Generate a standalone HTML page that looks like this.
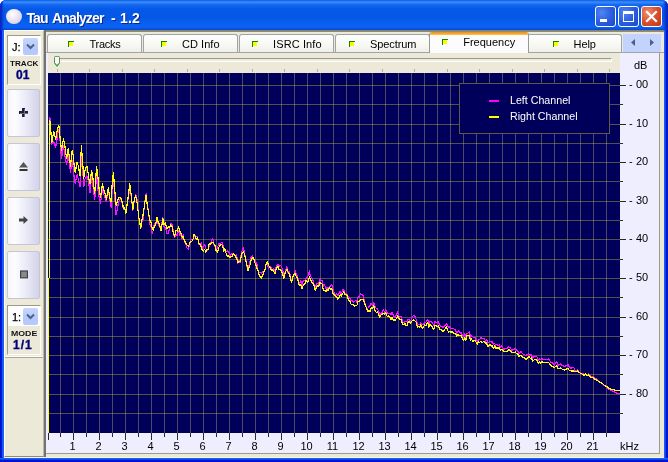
<!DOCTYPE html>
<html><head><meta charset="utf-8"><title>Tau Analyzer - 1.2</title>
<style>
*{box-sizing:border-box;margin:0;padding:0}
html,body{width:668px;height:462px;overflow:hidden;background:#fff}
body{position:relative;font-family:"Liberation Sans",sans-serif;font-size:11px;color:#000}
div,i,span,svg{position:absolute}
#win{will-change:transform;left:0;top:0;width:668px;height:462px;background:#0a3ee0;border-radius:6px 6px 0 0;overflow:hidden}
#tb{left:0;top:0;width:668px;height:30px;background:linear-gradient(to bottom,#0a5be8 0%,#3c8cfb 7%,#1268f0 16%,#0659e8 30%,#0558e6 60%,#0a62f3 85%,#0a5ff0 92%,#0748d0 100%)}
#bl{left:0;top:30px;width:4px;height:432px;background:linear-gradient(to right,#0014d0 0%,#0014d0 35%,#1858f5 62%,#1e62fa 100%)}
#br{left:664px;top:30px;width:4px;height:432px;background:linear-gradient(to left,#0014d0 0%,#0014d0 45%,#1858f5 70%,#1e62fa 100%)}
#bb{left:0;top:458px;width:668px;height:4px;background:linear-gradient(to bottom,#1e62fa 0%,#1858f5 30%,#0014d0 60%,#0014d0 100%)}
#ttl{left:26.500px;top:10px;width:130px;height:16px;font-weight:bold;font-size:14px;line-height:16px;color:#fff;white-space:nowrap;text-shadow:1px 1px 0 #0a2a8a;letter-spacing:-0.4px}
#ttl span{top:0}
#ico{left:6px;top:9px;width:15.500px;height:15px;border-radius:50%;background:radial-gradient(circle at 40% 35%,#ffffff 0%,#efeaf4 35%,#dcd6e8 70%,#c2bcd8 100%)}
.cb{top:6px;width:21px;height:21px;border-radius:3px;border:1px solid #fff}
#cmin,#cmax{background:radial-gradient(circle at 30% 30%,#4f86f5 0%,#2b5fe0 50%,#1c46c8 100%)}
#ccls{background:radial-gradient(circle at 30% 30%,#ee8f72 0%,#d8502c 50%,#b9391a 100%)}
#client{left:4px;top:30px;width:660px;height:428px;background:#ece9d8}
/* left panel */
#lp{left:4px;top:30px;width:40px;height:427px;background:#ece9d8;border-top:1px solid #fff;border-left:1px solid #fff;border-right:1px solid #bab7a8;border-bottom:1px solid #8c8a7c}
.grp{left:7px;width:34px;border:1px solid;border-color:#9d9a8c #fff #fff #9d9a8c}
.combo{left:8px;width:32px;height:20px;background:#fff}
.combo span{-webkit-text-stroke:0.25px #000}
.cbtn{width:15px;height:17px;background:linear-gradient(to bottom,#c6d6fd,#b5c8fb 60%,#b7cafc);border-radius:2px}
.btn{left:7px;width:33px;height:48px;border:1px solid #c4c4dc;border-radius:2px;background:linear-gradient(to right,#f4f4fc 0%,#fdfdff 20%,#ececf8 55%,#d2d2ea 100%)}
.lbl{font-weight:bold;font-size:7px;line-height:8px;letter-spacing:0;transform-origin:0 0;white-space:nowrap;color:#111}
.num{font-weight:bold;font-size:12px;line-height:12px;color:#00007c;white-space:nowrap;-webkit-text-stroke:0.35px #00007c}
/* tabs */
.tab{top:34px;width:95px;height:19px;border:1px solid #9ca5a8;border-bottom:none;border-radius:3px 3px 0 0;background:linear-gradient(to bottom,#fefefe,#f7f7f2 60%,#eeeee6)}
.tab span,#seltab span{top:3px;line-height:13px;font-size:11px;white-space:nowrap;letter-spacing:-0.35px}
.ti{top:6px;width:6px;height:6px;background:linear-gradient(#ff0,#ff0) no-repeat 0 0/4px 4px;border-top:1px solid #0a860a;border-left:1px solid #0a860a}
#seltab{left:429px;top:32px;width:100px;height:22px;background:#fcfcfe;border:1px solid #919b9c;border-bottom:none;border-top:none;border-radius:3px 3px 0 0;overflow:hidden}
#seltab b{position:absolute;left:0;top:0;width:100px;height:3px;background:linear-gradient(to bottom,#e68b2c,#ffc73c)}
.tk{height:1px;background:#2a2a2a}
.dbl{left:629px;width:30px;font-size:11px;line-height:13px;white-space:nowrap}
.xl{top:440px;width:21px;text-align:center;font-size:11px;line-height:13px}
.stk{top:69px;width:1px;height:3px;background:#b3b1a2}
</style></head><body>
<div id="win">
<div id="tb"></div><div style="left:0;top:0;width:4px;height:30px;background:linear-gradient(to right,#0a24c4 0%,#0a30cc 40%,rgba(10,60,220,0) 100%)"></div><div style="left:663px;top:0;width:5px;height:30px;background:linear-gradient(to left,#0a24c4 0%,#0a30cc 40%,rgba(10,60,220,0) 100%)"></div><div id="bl"></div><div id="br"></div><div id="bb"></div>
<div id="ico"></div>
<div id="ttl"><span style="left:0;letter-spacing:-0.9px">Tau</span> <span style="left:25.5px;letter-spacing:-0.85px">Analyzer</span> <span style="left:84.5px">-</span> <span style="left:93.5px;letter-spacing:0.2px">1.2</span></div>
<div class="cb" id="cmin" style="left:595px"><i style="left:4px;top:12px;width:7px;height:3px;background:#fff"></i></div>
<div class="cb" id="cmax" style="left:618px"><i style="left:4px;top:4px;width:11px;height:11px;border:1px solid #fff;border-top-width:3px"></i></div>
<div class="cb" id="ccls" style="left:641px"><svg width="19" height="19" viewBox="0 0 19 19" style="left:0;top:0"><path d="M5 5 L14 14 M14 5 L5 14" stroke="#fff" stroke-width="2.2" stroke-linecap="square"/></svg></div>
<div id="client"></div>

<!-- right region sunken border -->
<div style="left:44px;top:30px;width:620px;height:1px;background:#858272"></div>
<div style="left:44px;top:31px;width:620px;height:1px;background:#8f8c7c"></div>
<div style="left:44px;top:30px;width:2px;height:427px;background:#737370"></div>

<!-- left panel -->
<div id="lp"></div>
<div style="left:4px;top:356px;width:39px;height:1px;background:#fff"></div><div style="left:5px;top:357px;width:38px;height:1px;background:#aaa796"></div>
<div class="grp" style="top:35px;height:50px"></div>
<div class="combo" style="top:36px"><span style="left:4px;top:5px;font-size:11px;line-height:13px">J:</span><div class="cbtn" style="left:15px;top:2px"><svg width="15" height="17" viewBox="0 0 15 17" style="left:0;top:0"><path d="M4 6.5 L7.5 10 L11 6.5" fill="none" stroke="#4d6185" stroke-width="2"/></svg></div></div>
<div class="lbl" style="left:10px;top:60px;transform:scaleX(1.16)">TRACK</div>
<div class="num" style="left:16px;top:69px">01</div>

<div class="btn" style="top:89px"><svg width="30" height="46" viewBox="0 0 30 46" style="left:0;top:0"><path d="M14 18 h3 v3 h3 v3 h-3 v3 h-3 v-3 h-3 v-3 h3z" fill="#1e1e3c"/><path d="M16 19 h1 v8 h-1z M12 23 h8 v1 h-8z" fill="#6c6c78"/></svg></div>
<div class="btn" style="top:143px"><svg width="30" height="46" viewBox="0 0 30 46" style="left:0;top:0"><path d="M15.500 18 L20 23.500 L11 23.500z" fill="#555"/><rect x="11.500" y="25" width="8" height="2" fill="#333"/></svg></div>
<div class="btn" style="top:197px"><svg width="30" height="46" viewBox="0 0 30 46" style="left:0;top:0"><path d="M11 20.500 h4.500 v-2.500 l4.500 4 l-4.500 4 v-2.500 h-4.500z" fill="#444"/></svg></div>
<div class="btn" style="top:251px"><svg width="30" height="46" viewBox="0 0 30 46" style="left:0;top:0"><rect x="12.600" y="19" width="6.800" height="6.800" fill="#8a8a8a" stroke="#444" stroke-width="1.200"/></svg></div>

<div class="grp" style="top:305px;height:50px"></div>
<div class="combo" style="top:306px"><span style="left:4px;top:5px;font-size:11px;line-height:13px">1:</span><div class="cbtn" style="left:15px;top:2px"><svg width="15" height="17" viewBox="0 0 15 17" style="left:0;top:0"><path d="M4 6.5 L7.5 10 L11 6.5" fill="none" stroke="#4d6185" stroke-width="2"/></svg></div></div>
<div class="lbl" style="left:11px;top:330px;transform:scaleX(1.25)">MODE</div>
<div class="num" style="left:13px;top:339px;letter-spacing:1px">1/1</div>

<!-- tab strip -->
<div class="tab" style="left:47px"><i class="ti" style="left:20px"></i><span style="left:41.5px;letter-spacing:-0.25px">Tracks</span></div><div class="tab" style="left:143px"><i class="ti" style="left:17px"></i><span style="left:38.0px;letter-spacing:0.05px">CD Info</span></div><div class="tab" style="left:239px"><i class="ti" style="left:12px"></i><span style="left:33.0px;letter-spacing:0.12px">ISRC Info</span></div><div class="tab" style="left:335px"><i class="ti" style="left:13px"></i><span style="left:34.0px;letter-spacing:-0.10px">Spectrum</span></div><div class="tab" style="left:527px"><i class="ti" style="left:25px"></i><span style="left:45.5px;letter-spacing:-0.05px">Help</span></div>
<div style="left:46px;top:52px;width:618px;height:1px;background:#a0a6a6"></div>
<div id="seltab"><b></b><i class="ti" style="left:12px;top:7px"></i><span style="left:33.2px;top:4px;letter-spacing:0">Frequency</span></div>
<div style="left:429px;top:35px;width:1px;height:18px;background:#919b9c"></div>
<div style="left:528px;top:35px;width:1px;height:18px;background:#919b9c"></div>
<div style="left:623px;top:34px;width:38px;height:18px;background:#c3d3fd"><svg width="38" height="18" viewBox="0 0 38 18" style="left:0;top:0"><path d="M12 5 L8 8.500 L12 12z M27 5 L31 8.500 L27 12z" fill="#4d6185"/></svg></div>

<!-- plot control background -->
<div style="left:46px;top:53px;width:613px;height:400px;background:#eeeeff"></div>
<div style="left:659px;top:53px;width:1px;height:401px;background:#9d9a8c"></div>
<div style="left:46px;top:453px;width:614px;height:1px;background:#9d9a8c"></div>
<div style="left:4px;top:457px;width:660px;height:1px;background:#f8f6ea"></div>
<!-- slider panel -->
<div style="left:48px;top:53px;width:572px;height:20px;background:#ece9d8"></div>
<div style="left:59px;top:58px;width:553px;height:4px;border:1px solid;border-color:#9d9a8c #fff #fff #9d9a8c;background:#efecdf"></div>
<div class="stk" style="left:57px"></div><div class="stk" style="left:89px"></div><div class="stk" style="left:122px"></div><div class="stk" style="left:154px"></div><div class="stk" style="left:187px"></div><div class="stk" style="left:219px"></div><div class="stk" style="left:252px"></div><div class="stk" style="left:284px"></div><div class="stk" style="left:317px"></div><div class="stk" style="left:349px"></div><div class="stk" style="left:382px"></div><div class="stk" style="left:414px"></div><div class="stk" style="left:447px"></div><div class="stk" style="left:479px"></div><div class="stk" style="left:512px"></div><div class="stk" style="left:544px"></div><div class="stk" style="left:577px"></div><div class="stk" style="left:609px"></div>
<svg width="8" height="13" viewBox="0 0 8 13" style="left:53px;top:55px"><path d="M1.5 2.500 Q1.500 1.500 2.500 1.500 L5.500 1.500 Q6.500 1.500 6.500 2.500 L6.500 8 L4 11 L1.500 8z" fill="#f8f8f4" stroke="#6f7f72" stroke-width="1"/><path d="M2 1.500 H6" stroke="#3cc23c" stroke-width="1.200"/><path d="M2 8.500 L4 11 L6 8.500" fill="none" stroke="#2fa52f" stroke-width="1.200"/></svg>

<!-- plot -->
<svg width="572" height="360" viewBox="0 0 572 360" style="left:48px;top:73px;background:#00005a" shape-rendering="crispEdges">
<g fill="rgba(178,180,50,0.46)"><rect x="12" y="0" width="1" height="360" fill="rgba(150,150,115,0.5)"/><rect x="25" y="0" width="1" height="360" fill="rgba(150,150,115,0.5)"/><rect x="38" y="0" width="1" height="360" fill="rgba(150,150,115,0.5)"/><rect x="51" y="0" width="1" height="360" fill="rgba(150,150,115,0.5)"/><rect x="64" y="0" width="1" height="360" fill="rgba(150,150,115,0.5)"/><rect x="77" y="0" width="1" height="360" fill="rgba(150,150,115,0.5)"/><rect x="90" y="0" width="1" height="360" fill="rgba(150,150,115,0.5)"/><rect x="103" y="0" width="1" height="360" fill="rgba(150,150,115,0.5)"/><rect x="116" y="0" width="1" height="360" fill="rgba(150,150,115,0.5)"/><rect x="129" y="0" width="1" height="360" fill="rgba(150,150,115,0.5)"/><rect x="142" y="0" width="1" height="360" fill="rgba(150,150,115,0.5)"/><rect x="155" y="0" width="1" height="360" fill="rgba(150,150,115,0.5)"/><rect x="168" y="0" width="1" height="360" fill="rgba(150,150,115,0.5)"/><rect x="181" y="0" width="1" height="360" fill="rgba(150,150,115,0.5)"/><rect x="194" y="0" width="1" height="360" fill="rgba(150,150,115,0.5)"/><rect x="207" y="0" width="1" height="360" fill="rgba(150,150,115,0.5)"/><rect x="220" y="0" width="1" height="360" fill="rgba(150,150,115,0.5)"/><rect x="233" y="0" width="1" height="360" fill="rgba(150,150,115,0.5)"/><rect x="246" y="0" width="1" height="360" fill="rgba(150,150,115,0.5)"/><rect x="259" y="0" width="1" height="360" fill="rgba(150,150,115,0.5)"/><rect x="272" y="0" width="1" height="360" fill="rgba(150,150,115,0.5)"/><rect x="285" y="0" width="1" height="360" fill="rgba(150,150,115,0.5)"/><rect x="298" y="0" width="1" height="360" fill="rgba(150,150,115,0.5)"/><rect x="311" y="0" width="1" height="360" fill="rgba(150,150,115,0.5)"/><rect x="324" y="0" width="1" height="360" fill="rgba(150,150,115,0.5)"/><rect x="337" y="0" width="1" height="360" fill="rgba(150,150,115,0.5)"/><rect x="350" y="0" width="1" height="360" fill="rgba(150,150,115,0.5)"/><rect x="363" y="0" width="1" height="360" fill="rgba(150,150,115,0.5)"/><rect x="376" y="0" width="1" height="360" fill="rgba(150,150,115,0.5)"/><rect x="389" y="0" width="1" height="360" fill="rgba(150,150,115,0.5)"/><rect x="402" y="0" width="1" height="360" fill="rgba(150,150,115,0.5)"/><rect x="415" y="0" width="1" height="360" fill="rgba(150,150,115,0.5)"/><rect x="428" y="0" width="1" height="360" fill="rgba(150,150,115,0.5)"/><rect x="441" y="0" width="1" height="360" fill="rgba(150,150,115,0.5)"/><rect x="454" y="0" width="1" height="360" fill="rgba(150,150,115,0.5)"/><rect x="467" y="0" width="1" height="360" fill="rgba(150,150,115,0.5)"/><rect x="480" y="0" width="1" height="360" fill="rgba(150,150,115,0.5)"/><rect x="493" y="0" width="1" height="360" fill="rgba(150,150,115,0.5)"/><rect x="506" y="0" width="1" height="360" fill="rgba(150,150,115,0.5)"/><rect x="519" y="0" width="1" height="360" fill="rgba(150,150,115,0.5)"/><rect x="532" y="0" width="1" height="360" fill="rgba(150,150,115,0.5)"/><rect x="545" y="0" width="1" height="360" fill="rgba(150,150,115,0.5)"/><rect x="558" y="0" width="1" height="360" fill="rgba(150,150,115,0.5)"/><rect x="0" y="12" width="572" height="1"/><rect x="0" y="31" width="572" height="1"/><rect x="0" y="51" width="572" height="1"/><rect x="0" y="70" width="572" height="1"/><rect x="0" y="89" width="572" height="1"/><rect x="0" y="108" width="572" height="1"/><rect x="0" y="128" width="572" height="1"/><rect x="0" y="147" width="572" height="1"/><rect x="0" y="166" width="572" height="1"/><rect x="0" y="186" width="572" height="1"/><rect x="0" y="205" width="572" height="1"/><rect x="0" y="224" width="572" height="1"/><rect x="0" y="244" width="572" height="1"/><rect x="0" y="263" width="572" height="1"/><rect x="0" y="282" width="572" height="1"/><rect x="0" y="301" width="572" height="1"/><rect x="0" y="321" width="572" height="1"/><rect x="0" y="340" width="572" height="1"/></g>
<rect x="411.500" y="10.500" width="150" height="50" fill="#00005a" stroke="#5c5c46" stroke-width="1"/>
<g shape-rendering="crispEdges" fill="none" stroke-width="1.2" stroke-linejoin="round">
<polyline stroke="#ff10ff" points="1.8,43.7 3.8,71.0 5.7,68.4 7.7,74.1 8.7,67.9 9.8,61.0 10.8,56.3 12.2,69.1 13.5,85.6 15.5,72.5 16.5,80.2 17.6,86.6 18.6,91.5 20.2,82.8 21.3,89.1 22.5,99.1 24.1,87.8 25.1,93.9 26.1,104.1 27.2,110.1 29.1,101.7 30.5,106.7 31.9,114.0 33.4,84.0 34.6,94.9 35.8,113.8 36.8,106.6 37.8,104.5 38.9,103.2 39.9,106.1 41.0,111.5 42.0,120.1 43.6,103.2 44.6,109.5 45.6,117.4 46.7,126.3 48.6,101.8 49.9,116.0 51.2,124.9 52.5,130.6 54.5,115.0 55.8,121.5 57.1,124.9 58.4,128.7 60.3,116.0 61.7,125.5 63.1,134.3 64.2,116.4 65.4,102.4 66.8,124.8 68.1,141.7 69.4,135.3 70.7,128.3 72.0,126.5 73.2,126.0 74.4,131.3 75.5,136.2 76.7,135.9 77.9,137.3 79.2,130.4 80.5,124.4 81.8,114.6 82.8,120.3 83.8,128.8 84.9,137.2 86.3,126.9 87.6,122.0 88.6,123.7 89.6,131.5 90.7,146.0 91.7,147.7 92.7,155.8 93.8,149.4 94.9,146.7 96.0,135.9 97.1,127.0 98.1,120.8 99.4,131.7 100.7,140.2 102.0,151.3 103.1,154.2 104.1,160.3 105.2,157.5 106.5,150.4 107.8,151.3 109.1,147.5 110.4,152.0 111.7,153.9 113.0,155.7 114.9,144.7 116.2,154.9 117.5,154.3 118.8,160.8 120.1,160.2 121.4,156.5 122.7,150.5 124.0,151.0 125.3,158.9 126.6,164.9 127.9,161.8 129.2,162.2 130.5,157.3 131.7,162.2 132.8,161.9 134.0,166.1 135.2,161.8 136.4,169.0 137.7,169.9 138.9,175.0 140.2,176.3 141.4,172.0 142.6,166.5 143.8,166.1 144.9,166.9 146.1,163.6 147.3,162.1 148.4,163.3 149.6,163.8 150.8,171.2 151.9,171.3 153.1,169.8 154.3,175.3 155.5,172.7 156.6,171.5 157.8,175.7 159.0,177.2 160.1,176.8 161.3,172.6 162.5,171.2 163.6,166.8 164.8,165.5 166.0,171.5 167.2,173.5 168.3,177.1 169.5,174.1 170.8,171.0 172.1,171.2 173.4,169.4 174.6,169.5 175.7,176.9 176.9,177.3 178.1,178.4 179.2,178.0 180.4,178.5 181.6,181.0 182.7,182.5 183.9,180.1 185.1,180.6 186.3,181.9 187.4,183.3 188.6,181.8 189.8,190.6 190.9,187.2 192.2,189.7 193.5,179.2 195.5,174.6 196.6,180.9 197.7,184.7 198.8,192.2 200.0,197.3 201.1,191.9 202.2,188.1 203.3,183.8 204.5,183.1 205.6,185.5 206.7,187.2 207.8,189.3 208.9,191.5 210.1,197.8 211.2,199.7 212.3,199.4 213.4,200.3 214.6,198.3 215.8,198.7 217.0,197.2 218.2,190.9 219.4,191.1 220.5,195.1 221.6,193.3 222.6,193.3 223.7,197.4 224.8,197.5 225.8,195.9 226.9,199.6 228.4,193.2 229.9,191.0 231.1,193.6 232.3,192.3 233.5,193.4 234.7,197.1 235.9,201.7 237.4,199.0 238.9,193.6 240.0,199.2 241.1,198.9 242.3,201.6 243.4,209.5 244.9,204.4 246.4,200.1 247.4,197.7 248.5,201.9 249.6,202.3 250.6,211.3 251.7,209.8 252.8,207.9 253.9,213.7 254.9,208.5 256.0,207.5 257.1,207.6 258.1,205.4 259.2,204.7 260.3,202.5 261.3,197.9 262.5,203.4 263.7,205.2 264.9,207.3 266.1,211.3 267.3,214.4 268.5,210.8 269.6,210.7 270.7,211.3 271.8,206.3 273.0,207.5 274.2,207.6 275.4,213.2 276.6,211.6 277.8,215.4 279.0,214.8 280.2,215.9 281.4,213.9 282.6,212.7 283.8,211.3 285.0,216.3 286.2,219.9 287.4,222.3 288.6,220.7 289.8,222.6 291.0,220.5 292.2,218.3 293.4,221.4 294.6,216.8 295.8,216.6 297.0,220.1 298.2,220.3 299.4,221.7 300.6,225.7 301.8,224.7 303.0,227.2 304.2,227.3 305.4,229.4 306.6,228.5 307.7,227.3 308.9,229.1 310.1,224.5 311.3,223.5 312.5,220.8 313.7,221.9 314.9,222.0 316.1,226.8 317.3,231.3 318.5,234.4 319.7,235.7 320.9,233.5 322.1,232.7 323.3,230.2 324.5,232.7 325.7,229.1 326.9,232.8 328.1,235.3 329.3,235.7 330.5,238.0 331.7,242.4 332.9,240.8 334.1,239.4 335.3,236.4 336.5,239.1 337.7,236.3 338.8,239.7 339.8,240.0 340.9,240.4 342.0,240.8 343.0,242.0 344.1,239.4 345.2,242.0 346.3,244.1 347.4,244.3 348.5,241.7 349.7,239.0 350.9,244.2 352.1,243.9 353.3,243.2 354.5,248.8 355.7,249.3 356.8,248.8 357.9,248.7 359.0,249.0 360.1,246.6 361.3,246.5 362.4,249.0 363.5,245.4 364.6,243.4 365.8,242.4 367.0,243.3 368.2,246.5 369.4,251.3 370.6,251.4 371.7,251.8 372.7,249.2 373.7,251.7 374.8,251.5 375.8,250.7 376.8,249.9 377.9,249.1 378.9,247.3 379.9,246.9 381.0,250.4 382.0,248.0 383.4,248.7 384.5,249.8 385.7,252.3 386.8,248.9 388.0,249.1 389.1,249.5 390.3,248.1 391.4,251.5 392.6,253.0 393.7,253.2 394.9,254.4 396.0,253.5 397.2,252.5 398.3,250.7 399.5,252.6 400.6,254.5 401.8,253.9 402.9,255.8 404.1,255.8 405.2,255.3 406.4,256.3 407.5,257.3 408.7,260.0 409.8,258.1 411.0,257.9 412.1,260.2 413.3,259.6 414.4,262.5 415.6,263.8 416.7,260.5 417.9,264.7 419.0,260.8 420.2,259.9 421.3,258.6 422.5,264.1 423.6,262.3 424.8,263.9 425.9,264.9 427.1,264.2 428.2,267.1 429.4,268.1 430.5,266.5 431.7,266.6 432.8,264.7 434.0,265.6 435.1,265.2 436.3,265.2 437.4,268.0 438.6,266.2 439.7,270.4 440.9,269.2 442.0,268.1 443.2,269.2 444.3,268.7 445.5,271.8 446.6,270.3 447.8,272.1 448.9,271.3 450.1,272.4 451.2,271.9 452.4,274.2 453.5,272.7 454.7,274.4 455.8,276.6 457.0,275.5 458.1,275.0 459.3,275.6 460.4,274.0 461.6,274.5 462.7,275.4 463.9,277.6 465.0,276.3 466.2,276.6 467.3,275.6 468.5,277.0 469.6,277.8 470.8,280.9 471.9,279.3 473.1,278.8 474.2,280.1 475.4,281.3 476.5,281.6 477.7,282.6 478.8,281.7 480.0,281.0 481.1,281.1 482.3,282.0 483.4,281.2 484.6,285.5 485.7,283.4 486.9,283.7 488.0,283.0 489.2,284.1 490.3,287.8 491.5,285.9 492.6,286.8 493.8,285.1 494.9,286.6 496.1,286.2 497.2,286.4 498.4,286.2 499.5,286.3 500.7,285.7 501.8,287.6 503.0,289.2 504.1,289.6 505.3,290.5 506.4,291.9 507.6,290.3 508.7,288.8 509.9,292.5 511.0,291.7 512.2,290.8 513.3,291.7 514.5,292.6 515.6,292.9 516.8,293.7 517.9,292.6 519.1,292.1 520.2,292.0 521.4,294.2 522.5,295.0 523.7,295.0 524.8,294.3 526.0,295.0 527.1,297.7 528.3,298.0 529.4,296.6 530.6,298.6 531.7,299.4 532.9,300.4 534.0,300.4 535.2,301.0 536.3,301.8 537.5,300.3 538.6,302.0 539.8,302.3 540.9,300.8 542.1,302.7 543.2,304.2 544.4,303.3 545.5,303.9 546.7,305.2 547.8,305.6 549.0,306.6 550.1,307.7 551.3,308.7 552.4,309.2 553.6,310.2 554.7,311.1 555.9,312.3 557.0,313.0 558.2,314.2 559.3,315.0 560.5,316.1 561.6,316.6 562.8,317.5 563.9,317.9 565.1,318.4 566.2,319.0 567.4,319.7 568.5,320.0 569.7,320.4 570.8,320.5 571.5,320.9"/>
<polyline stroke="#ffff00" points="1.8,46.5 3.8,69.9 5.7,58.2 7.7,66.0 8.7,60.4 9.8,54.8 10.8,52.3 12.2,65.9 13.5,77.7 15.5,66.0 16.5,69.9 17.6,79.2 18.6,85.5 20.2,75.7 21.3,83.7 22.5,93.3 24.1,77.7 25.1,82.2 26.1,92.0 27.2,99.1 29.1,89.4 30.5,93.4 31.9,103.0 33.4,73.0 34.6,88.6 35.8,105.0 36.8,98.5 37.8,94.7 38.9,93.3 39.9,98.7 41.0,106.9 42.0,110.8 43.6,97.2 44.6,102.7 45.6,111.1 46.7,120.6 48.6,93.3 49.9,104.4 51.2,116.8 52.5,124.5 54.5,110.8 55.8,116.5 57.1,120.6 58.4,126.4 60.3,114.7 61.7,124.4 63.1,128.4 64.2,111.0 65.4,99.1 66.8,117.8 68.1,132.3 69.4,128.4 70.7,124.9 72.0,124.5 73.2,125.3 74.4,129.6 75.5,135.7 76.7,135.0 77.9,140.1 79.2,130.8 80.5,121.4 81.8,110.8 82.8,118.5 83.8,128.0 84.9,136.2 86.3,126.7 87.6,122.5 88.6,126.5 89.6,134.0 90.7,143.5 91.7,148.6 92.7,155.7 93.8,147.9 94.9,142.9 96.0,135.5 97.1,127.9 98.1,122.5 99.4,132.7 100.7,140.6 102.0,147.9 103.1,149.6 104.1,154.8 105.2,157.6 106.5,153.2 107.8,150.8 109.1,144.0 110.4,149.9 111.7,151.8 113.0,157.6 114.9,145.9 116.2,152.0 117.5,150.1 118.8,155.7 120.1,153.9 121.4,154.6 122.7,151.8 124.0,153.6 125.3,159.5 126.6,163.5 127.9,157.4 129.2,158.0 130.5,153.7 131.7,158.0 132.8,159.6 134.0,164.1 135.2,163.5 136.4,167.4 137.7,170.5 138.9,171.8 140.2,173.2 141.4,171.3 142.6,168.3 143.8,168.2 144.9,166.5 146.1,161.5 147.3,163.3 148.4,166.4 149.6,164.7 150.8,170.5 151.9,171.2 153.1,173.7 154.3,177.3 155.5,177.9 156.6,176.2 157.8,179.0 159.0,176.4 160.1,176.2 161.3,170.3 162.5,171.0 163.6,169.3 164.8,169.3 166.0,170.9 167.2,172.5 168.3,178.7 169.5,179.0 170.8,174.2 172.1,172.3 173.4,171.2 174.6,172.9 175.7,178.2 176.9,175.8 178.1,180.3 179.2,182.9 180.4,182.9 181.6,184.5 182.7,183.7 183.9,183.6 185.1,181.0 186.3,181.2 187.4,183.6 188.6,184.8 189.8,189.5 190.9,188.8 192.2,188.9 193.5,181.5 195.5,178.4 196.6,181.7 197.7,186.9 198.8,191.8 200.0,197.9 201.1,194.5 202.2,191.6 203.3,186.7 204.5,184.4 205.6,184.7 206.7,189.3 207.8,191.7 208.9,194.9 210.1,197.8 211.2,202.3 212.3,203.7 213.4,205.4 214.6,202.2 215.8,199.4 217.0,196.3 218.2,190.1 219.4,188.9 220.5,192.5 221.6,193.7 222.6,195.8 223.7,197.2 224.8,197.0 225.8,198.7 226.9,200.9 228.4,195.2 229.9,193.4 231.1,196.4 232.3,196.1 233.5,198.5 234.7,201.6 235.9,205.4 237.4,199.3 238.9,196.4 240.0,199.0 241.1,201.0 242.3,204.1 243.4,209.9 244.9,203.7 246.4,200.9 247.4,201.1 248.5,204.5 249.6,205.0 250.6,211.2 251.7,212.1 252.8,212.0 253.9,215.9 254.9,213.0 256.0,211.7 257.1,210.1 258.1,207.2 259.2,209.0 260.3,208.0 261.3,203.9 262.5,206.4 263.7,209.2 264.9,210.0 266.1,212.8 267.3,217.4 268.5,214.7 269.6,212.5 270.7,213.3 271.8,209.9 273.0,210.0 274.2,211.2 275.4,217.4 276.6,217.2 277.8,218.9 279.0,216.6 280.2,217.9 281.4,214.8 282.6,216.6 283.8,215.9 285.0,220.3 286.2,221.8 287.4,223.1 288.6,223.1 289.8,226.3 291.0,224.2 292.2,221.7 293.4,223.2 294.6,220.5 295.8,218.9 297.0,222.0 298.2,221.6 299.4,222.9 300.6,227.5 301.8,227.8 303.0,231.1 304.2,231.3 305.4,232.0 306.6,233.0 307.7,232.3 308.9,232.3 310.1,228.6 311.3,228.8 312.5,226.8 313.7,226.3 314.9,226.5 316.1,228.9 317.3,232.5 318.5,234.8 319.7,238.3 320.9,238.0 322.1,238.1 323.3,234.5 324.5,235.6 325.7,232.3 326.9,237.1 328.1,239.3 329.3,238.9 330.5,240.6 331.7,244.3 332.9,242.1 334.1,241.1 335.3,240.2 336.5,241.3 337.7,239.8 338.8,242.8 339.8,243.6 340.9,242.9 342.0,244.8 343.0,246.6 344.1,244.2 345.2,247.3 346.3,246.9 347.4,247.0 348.5,245.3 349.7,242.8 350.9,245.8 352.1,246.3 353.3,246.7 354.5,251.4 355.7,251.8 356.8,250.4 357.9,252.1 359.0,252.4 360.1,249.0 361.3,248.5 362.4,250.6 363.5,248.9 364.6,247.3 365.8,246.9 367.0,247.9 368.2,249.2 369.4,254.0 370.6,253.3 371.7,254.6 372.7,251.3 373.7,254.4 374.8,255.0 375.8,253.4 376.8,251.8 377.9,252.6 378.9,250.4 379.9,249.7 381.0,254.2 382.0,251.8 383.4,253.1 384.5,254.4 385.7,256.8 386.8,252.5 388.0,252.1 389.1,253.3 390.3,252.9 391.4,255.9 392.6,256.3 393.7,257.2 394.9,258.6 396.0,257.9 397.2,255.6 398.3,253.7 399.5,256.8 400.6,259.2 401.8,258.1 402.9,259.4 404.1,258.8 405.2,259.4 406.4,260.8 407.5,260.6 408.7,263.5 409.8,262.0 411.0,261.9 412.1,262.7 413.3,262.9 414.4,265.6 415.6,267.4 416.7,264.1 417.9,267.2 419.0,262.4 420.2,262.7 421.3,262.4 422.5,267.0 423.6,266.1 424.8,268.6 425.9,267.9 427.1,267.5 428.2,269.5 429.4,271.1 430.5,268.7 431.7,269.4 432.8,268.2 434.0,269.8 435.1,268.8 436.3,268.3 437.4,270.5 438.6,269.7 439.7,273.5 440.9,272.6 442.0,271.4 443.2,273.0 444.3,272.5 445.5,275.4 446.6,272.9 447.8,275.6 448.9,274.7 450.1,275.2 451.2,274.1 452.4,277.4 453.5,276.5 454.7,277.1 455.8,278.7 457.0,278.2 458.1,278.7 459.3,278.3 460.4,277.1 461.6,277.0 462.7,278.1 463.9,280.0 465.0,279.7 466.2,279.4 467.3,279.0 468.5,280.5 469.6,280.5 470.8,283.3 471.9,282.6 473.1,282.5 474.2,283.8 475.4,284.7 476.5,285.1 477.7,286.6 478.8,285.7 480.0,284.2 481.1,283.7 482.3,285.6 483.4,284.6 484.6,288.3 485.7,287.2 486.9,286.6 488.0,286.7 489.2,287.3 490.3,290.9 491.5,288.8 492.6,290.2 493.8,288.6 494.9,289.8 496.1,289.5 497.2,289.4 498.4,289.4 499.5,289.6 500.7,289.8 501.8,291.0 503.0,292.5 504.1,293.3 505.3,293.6 506.4,294.6 507.6,293.3 508.7,292.5 509.9,296.0 511.0,295.7 512.2,294.8 513.3,295.3 514.5,296.4 515.6,296.5 516.8,297.1 517.9,296.4 519.1,295.5 520.2,295.7 521.4,297.5 522.5,297.9 523.7,298.0 524.8,297.9 526.0,298.3 527.1,298.9 528.3,298.6 529.4,297.8 530.6,299.4 531.7,299.7 532.9,300.8 534.0,300.9 535.2,302.0 536.3,302.3 537.5,301.1 538.6,302.5 539.8,302.6 540.9,301.8 542.1,303.4 543.2,304.6 544.4,304.5 545.5,305.1 546.7,306.0 547.8,306.5 549.0,307.2 550.1,308.2 551.3,308.9 552.4,309.3 553.6,310.2 554.7,310.8 555.9,311.9 557.0,312.5 558.2,313.4 559.3,314.0 560.5,315.1 561.6,315.4 562.8,316.1 563.9,316.2 565.1,316.5 566.2,316.8 567.4,317.4 568.5,317.5 569.7,317.8 570.8,317.8 571.5,318.0"/>
<path d="M1.500 47 V205 M0.500 205 V360" stroke="#ffff00" stroke-width="1"/>
</g>
<rect x="441" y="27" width="10" height="2" fill="#ff00ff"/>
<rect x="441" y="43" width="10" height="2" fill="#ffff00"/>
<text x="462" y="31" fill="#fff" font-family="Liberation Sans, sans-serif" font-size="10.67" shape-rendering="auto">Left Channel</text>
<text x="462" y="47" fill="#fff" font-family="Liberation Sans, sans-serif" font-size="10.67" shape-rendering="auto">Right Channel</text>
</svg>
<div class="tk" style="left:620px;top:85px;width:6px"></div><div class="dbl" style="top:78px">-<span style="left:7px;top:0">00</span></div><div class="tk" style="left:620px;top:104px;width:3px"></div><div class="tk" style="left:620px;top:124px;width:6px"></div><div class="dbl" style="top:117px">-<span style="left:7px;top:0">10</span></div><div class="tk" style="left:620px;top:143px;width:3px"></div><div class="tk" style="left:620px;top:162px;width:6px"></div><div class="dbl" style="top:155px">-<span style="left:7px;top:0">20</span></div><div class="tk" style="left:620px;top:181px;width:3px"></div><div class="tk" style="left:620px;top:201px;width:6px"></div><div class="dbl" style="top:194px">-<span style="left:7px;top:0">30</span></div><div class="tk" style="left:620px;top:220px;width:3px"></div><div class="tk" style="left:620px;top:239px;width:6px"></div><div class="dbl" style="top:232px">-<span style="left:7px;top:0">40</span></div><div class="tk" style="left:620px;top:259px;width:3px"></div><div class="tk" style="left:620px;top:278px;width:6px"></div><div class="dbl" style="top:271px">-<span style="left:7px;top:0">50</span></div><div class="tk" style="left:620px;top:297px;width:3px"></div><div class="tk" style="left:620px;top:317px;width:6px"></div><div class="dbl" style="top:310px">-<span style="left:7px;top:0">60</span></div><div class="tk" style="left:620px;top:336px;width:3px"></div><div class="tk" style="left:620px;top:355px;width:6px"></div><div class="dbl" style="top:348px">-<span style="left:7px;top:0">70</span></div><div class="tk" style="left:620px;top:374px;width:3px"></div><div class="tk" style="left:620px;top:394px;width:6px"></div><div class="dbl" style="top:387px">-<span style="left:7px;top:0">80</span></div><div class="tk" style="left:620px;top:413px;width:3px"></div><div class="tk" style="left:48px;top:433px;width:1px;height:7px"></div><div class="tk" style="left:60px;top:433px;width:1px;height:4px"></div><div class="tk" style="left:73px;top:433px;width:1px;height:7px"></div><div class="xl" style="left:62px">1</div><div class="tk" style="left:86px;top:433px;width:1px;height:4px"></div><div class="tk" style="left:99px;top:433px;width:1px;height:7px"></div><div class="xl" style="left:88px">2</div><div class="tk" style="left:112px;top:433px;width:1px;height:4px"></div><div class="tk" style="left:125px;top:433px;width:1px;height:7px"></div><div class="xl" style="left:114px">3</div><div class="tk" style="left:138px;top:433px;width:1px;height:4px"></div><div class="tk" style="left:151px;top:433px;width:1px;height:7px"></div><div class="xl" style="left:140px">4</div><div class="tk" style="left:164px;top:433px;width:1px;height:4px"></div><div class="tk" style="left:177px;top:433px;width:1px;height:7px"></div><div class="xl" style="left:166px">5</div><div class="tk" style="left:190px;top:433px;width:1px;height:4px"></div><div class="tk" style="left:203px;top:433px;width:1px;height:7px"></div><div class="xl" style="left:192px">6</div><div class="tk" style="left:216px;top:433px;width:1px;height:4px"></div><div class="tk" style="left:229px;top:433px;width:1px;height:7px"></div><div class="xl" style="left:218px">7</div><div class="tk" style="left:242px;top:433px;width:1px;height:4px"></div><div class="tk" style="left:255px;top:433px;width:1px;height:7px"></div><div class="xl" style="left:244px">8</div><div class="tk" style="left:268px;top:433px;width:1px;height:4px"></div><div class="tk" style="left:281px;top:433px;width:1px;height:7px"></div><div class="xl" style="left:270px">9</div><div class="tk" style="left:294px;top:433px;width:1px;height:4px"></div><div class="tk" style="left:307px;top:433px;width:1px;height:7px"></div><div class="xl" style="left:296px">10</div><div class="tk" style="left:320px;top:433px;width:1px;height:4px"></div><div class="tk" style="left:333px;top:433px;width:1px;height:7px"></div><div class="xl" style="left:322px">11</div><div class="tk" style="left:346px;top:433px;width:1px;height:4px"></div><div class="tk" style="left:359px;top:433px;width:1px;height:7px"></div><div class="xl" style="left:348px">12</div><div class="tk" style="left:372px;top:433px;width:1px;height:4px"></div><div class="tk" style="left:385px;top:433px;width:1px;height:7px"></div><div class="xl" style="left:374px">13</div><div class="tk" style="left:398px;top:433px;width:1px;height:4px"></div><div class="tk" style="left:411px;top:433px;width:1px;height:7px"></div><div class="xl" style="left:400px">14</div><div class="tk" style="left:424px;top:433px;width:1px;height:4px"></div><div class="tk" style="left:437px;top:433px;width:1px;height:7px"></div><div class="xl" style="left:426px">15</div><div class="tk" style="left:450px;top:433px;width:1px;height:4px"></div><div class="tk" style="left:463px;top:433px;width:1px;height:7px"></div><div class="xl" style="left:452px">16</div><div class="tk" style="left:476px;top:433px;width:1px;height:4px"></div><div class="tk" style="left:489px;top:433px;width:1px;height:7px"></div><div class="xl" style="left:478px">17</div><div class="tk" style="left:502px;top:433px;width:1px;height:4px"></div><div class="tk" style="left:515px;top:433px;width:1px;height:7px"></div><div class="xl" style="left:504px">18</div><div class="tk" style="left:528px;top:433px;width:1px;height:4px"></div><div class="tk" style="left:541px;top:433px;width:1px;height:7px"></div><div class="xl" style="left:530px">19</div><div class="tk" style="left:554px;top:433px;width:1px;height:4px"></div><div class="tk" style="left:567px;top:433px;width:1px;height:7px"></div><div class="xl" style="left:556px">20</div><div class="tk" style="left:580px;top:433px;width:1px;height:4px"></div><div class="tk" style="left:593px;top:433px;width:1px;height:7px"></div><div class="xl" style="left:582px">21</div><div class="tk" style="left:606px;top:433px;width:1px;height:4px"></div>
<div class="dbl" style="left:634px;top:59px">dB</div>
<div class="dbl" style="left:620px;top:440px">kHz</div>
</div>
</body></html>
